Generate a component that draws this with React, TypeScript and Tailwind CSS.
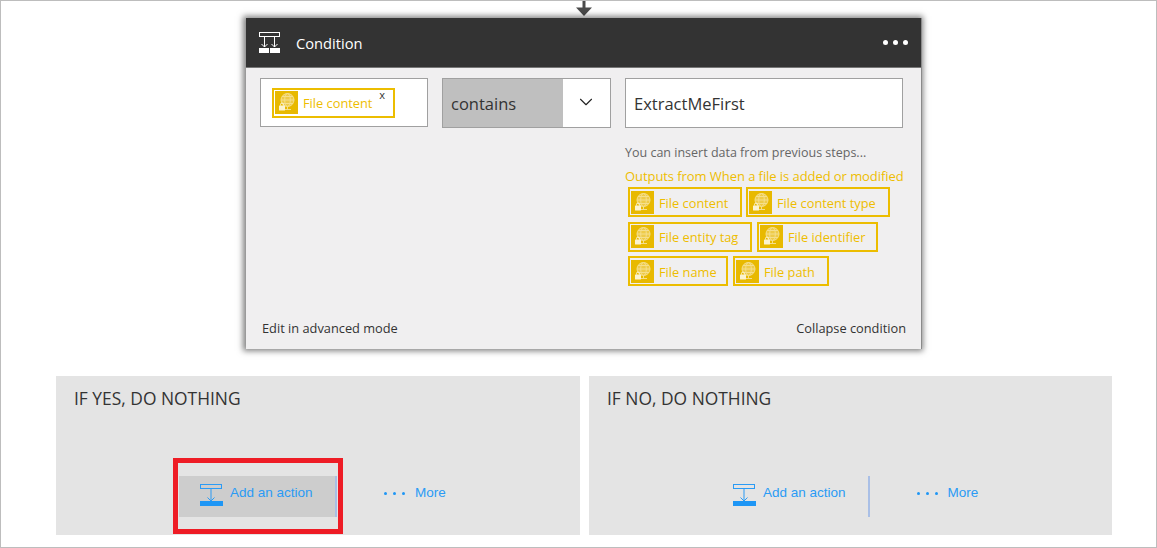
import React from "react";
import { ChevronDown } from "lucide-react";

const sans = "font-['Open_Sans','Noto_Sans',sans-serif]";

const TokenIcon = () => (
  <div className="w-[23px] h-[23px] bg-[#e8b900] flex items-center justify-center shrink-0">
    <svg width="21" height="21" viewBox="0 0 21 21" fill="none">
      <g stroke="#f5df8c" strokeWidth="1">
        <circle cx="11.5" cy="8" r="6.5" fill="#eecb4a" />
        <ellipse cx="11.5" cy="8" rx="2.8" ry="6.5" />
        <path d="M5 8h13M6 4.500h11M6 11.500h11" />
        <path d="M11.500 14.500v2.500M8 17.500h7" />
      </g>
      <rect x="3" y="13.500" width="6" height="5" rx="0.5" fill="#fbf3cf" />
      <path d="M4.500 13.500v-1a1.500 1.500 0 0 1 3 0v1" stroke="#fbf3cf" fill="none" />
    </svg>
  </div>
);

const Token = ({ label, width }: { label: string; width: string }) => (
  <div className={`${width} h-[30px] border-2 border-[#ecbd00] flex items-center pl-[1px] shrink-0`}>
    <TokenIcon />
    <span className="ml-[5px] pt-[3px] text-[12.8px] text-[#eebd00] whitespace-nowrap">{label}</span>
  </div>
);

const ConditionIcon = () => (
  <svg width="22" height="22" viewBox="0 0 22 22" fill="none" stroke="#fff" strokeWidth="1">
    <rect x="0.5" y="0.5" width="20" height="4" />
    <path d="M5.500 5v10M2.500 12l3 3 3-3M15.500 5v10M12.500 12l3 3 3-3" />
    <rect x="0" y="16" width="10" height="5" fill="#fff" stroke="none" />
    <rect x="11" y="16" width="10" height="5" fill="#fff" stroke="none" />
  </svg>
);

const ActionIcon = () => (
  <svg className="mb-[4px] shrink-0" width="23" height="22" viewBox="0 0 23 22" fill="none" stroke="#2a9bf5" strokeWidth="1">
    <rect x="0.5" y="0.5" width="21" height="4" />
    <path d="M11 5v12M7.500 13.500l3.500 3.500 3.500-3.500" />
    <rect x="0" y="17" width="23" height="5" fill="#1e96f5" stroke="none" />
  </svg>
);

const MoreLink = () => (
  <div className="mb-[6px] flex items-center text-[13.5px] text-[#2a9bf5] font-['Liberation_Sans',sans-serif]">
    <span className="flex gap-[6px] mr-[10px]">
      <span className="w-[3px] h-[3px] rounded-full bg-[#1e96f5]" />
      <span className="w-[3px] h-[3px] rounded-full bg-[#1e96f5]" />
      <span className="w-[3px] h-[3px] rounded-full bg-[#1e96f5]" />
    </span>
    More
  </div>
);

export default function App() {
  return (
    <div className={`w-[1157px] h-[548px] bg-white border border-[#bdbdbd] flex flex-col overflow-hidden ${sans}`}>
      {/* Condition card */}
      <div className="w-[676px] ml-[245px] flex flex-col">
        <div className="h-[17px] flex justify-center">
          <svg width="16" height="16" viewBox="0 0 16 16" fill="#4a4a4a">
            <path d="M6.500 0h3v7h-3z" />
            <path d="M0 6.500h16l-8 8.500z" />
          </svg>
        </div>
        <div className="h-[331px] bg-[#f0eff0] border-r border-[#8a8a8a] shadow-[-1px_0_6px_2px_rgba(0,0,0,0.5)] flex flex-col">
          <div className="h-[50px] bg-[#333333] flex items-center pl-[13px] pr-[13px] border-b border-[#777]">
            <ConditionIcon />
            <span className="ml-[15px] pt-[2px] text-[14.7px] text-white">Condition</span>
            <div className="ml-auto flex gap-[5px]">
              <span className="w-[5px] h-[5px] rounded-full bg-white" />
              <span className="w-[5px] h-[5px] rounded-full bg-white" />
              <span className="w-[5px] h-[5px] rounded-full bg-white" />
            </div>
          </div>
          <div className="flex-1 flex pt-[10px] pl-[14px]">
            <div className="w-[168px] h-[49px] bg-white border border-[#a0a0a0] flex items-center pl-[11px] shrink-0">
              <div className="relative w-[123px] h-[30px] border-2 border-[#ecbd00] flex items-center pl-[1px]">
                <TokenIcon />
                <span className="ml-[5px] pt-[3px] text-[12.8px] text-[#eebd00] whitespace-nowrap">File content</span>
                <span className="absolute right-[8px] -top-[3px] text-[11px] text-[#333]">x</span>
              </div>
            </div>
            <div className="ml-[14px] w-[169px] h-[50px] bg-white border border-[#a0a0a0] flex shrink-0">
              <div className="w-[120px] bg-[#bfbfbf] flex items-center pl-[8px] pt-[3px] text-[16.5px] text-[#333]">contains</div>
              <div className="flex-1 flex items-center justify-center pb-[3px] pr-[1px]">
                <ChevronDown size={22} strokeWidth={1.2} color="#222" />
              </div>
            </div>
            <div className="ml-[14px] w-[278px] shrink-0 flex flex-col">
              <div className="h-[50px] bg-white border border-[#a0a0a0] flex items-center pl-[8px] pt-[3px] text-[16.5px] text-[#333]">
                ExtractMeFirst
              </div>
              <div className="mt-[16px] text-[12.5px] leading-[18px] text-[#666]">You can insert data from previous steps...</div>
              <div className="mt-[5px] text-[13px] leading-[18px] text-[#eebd00] whitespace-nowrap tracking-[-0.07px]">
                Outputs from When a file is added or modified
              </div>
              <div className="mt-[2px] pl-[3px] flex flex-col gap-[4.5px]">
                <div className="flex gap-[4px]">
                  <Token label="File content" width="w-[114px]" />
                  <Token label="File content type" width="w-[144px]" />
                </div>
                <div className="flex gap-[5px]">
                  <Token label="File entity tag" width="w-[124px]" />
                  <Token label="File identifier" width="w-[121px]" />
                </div>
                <div className="flex gap-[5px]">
                  <Token label="File name" width="w-[100px]" />
                  <Token label="File path" width="w-[96px]" />
                </div>
              </div>
            </div>
          </div>
          <div className="h-[41px] pt-[11px] flex items-start justify-between pl-[16px] pr-[15px] text-[12.8px] leading-[18px] text-[#333]">
            <span>Edit in advanced mode</span>
            <span>Collapse condition</span>
          </div>
        </div>
      </div>

      {/* Branches */}
      <div className="mt-[27px] ml-[55px] flex gap-[9px]">
        <div className="relative w-[524px] h-[159px] bg-[#e4e4e4] flex flex-col">
          <div className="pt-[11px] pl-[18px] text-[17.4px] leading-[22px] text-[#333]">IF YES, DO NOTHING</div>
          <div className="mt-[67px] ml-[123px] flex items-center">
            <div className="w-[158px] h-[41px] bg-[#cdcdcd] border-r-2 border-[#a9bfe6] flex items-center pl-[21px]">
              <ActionIcon />
              <span className="ml-[7px] mb-[6px] text-[13.5px] text-[#2a9bf5] font-['Liberation_Sans',sans-serif]">Add an action</span>
            </div>
            <div className="ml-[47px]">
              <MoreLink />
            </div>
          </div>
          <div className="absolute left-[117px] top-[82px] w-[170px] h-[76px] border-[5px] border-[#ee1c25]" />
        </div>
        <div className="w-[523px] h-[159px] bg-[#e4e4e4] flex flex-col">
          <div className="pt-[11px] pl-[18px] text-[17.4px] leading-[22px] text-[#333]">IF NO, DO NOTHING</div>
          <div className="mt-[67px] ml-[144px] flex items-center">
            <ActionIcon />
            <span className="ml-[7px] mb-[6px] text-[13.5px] text-[#2a9bf5] font-['Liberation_Sans',sans-serif]">Add an action</span>
            <div className="ml-[22px] w-[2px] h-[41px] bg-[#a9bfe6]" />
            <div className="ml-[47px]">
              <MoreLink />
            </div>
          </div>
        </div>
      </div>
    </div>
  );
}
